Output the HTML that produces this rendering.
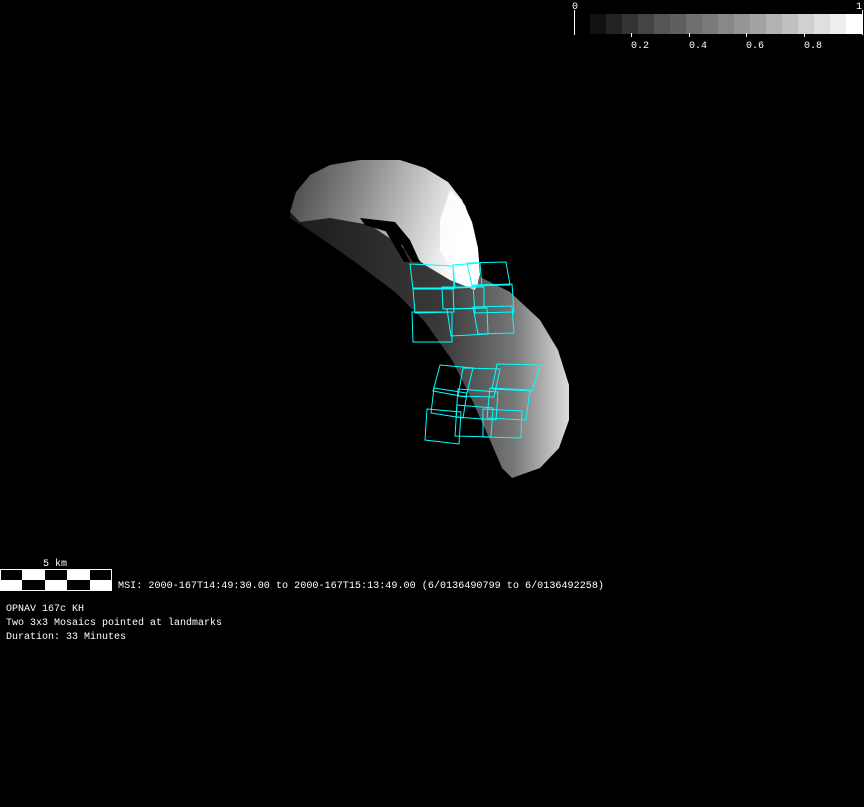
<!DOCTYPE html>
<html><head><style>
html,body{margin:0;padding:0;background:#000;width:864px;height:807px;overflow:hidden}
svg{position:absolute;left:0;top:0}
text{font-family:"Liberation Mono","DejaVu Sans Mono",monospace;fill:#fff;font-size:10px}
</style></head><body>
<svg width="864" height="807" viewBox="0 0 864 807">
<defs>
<linearGradient id="up" x1="0" y1="0" x2="1" y2="0.2">
<stop offset="0" stop-color="#444"/><stop offset="0.4" stop-color="#8a8a8a"/><stop offset="0.75" stop-color="#cfcfcf"/><stop offset="1" stop-color="#fff"/></linearGradient>
<linearGradient id="band" x1="0" y1="0" x2="1" y2="0">
<stop offset="0" stop-color="#1a1a1a"/><stop offset="0.55" stop-color="#3a3a3a"/><stop offset="0.8" stop-color="#777"/><stop offset="1" stop-color="#ddd"/></linearGradient>
</defs>
<!-- colorbar -->
<g>
<rect x="590" y="14" width="16" height="20" fill="#111"/><rect x="606" y="14" width="16" height="20" fill="#222"/><rect x="622" y="14" width="16" height="20" fill="#333"/><rect x="638" y="14" width="16" height="20" fill="#444"/><rect x="654" y="14" width="16" height="20" fill="#555"/><rect x="670" y="14" width="16" height="20" fill="#5f5f5f"/><rect x="686" y="14" width="16" height="20" fill="#6f6f6f"/><rect x="702" y="14" width="16" height="20" fill="#7a7a7a"/><rect x="718" y="14" width="16" height="20" fill="#888"/><rect x="734" y="14" width="16" height="20" fill="#959595"/><rect x="750" y="14" width="16" height="20" fill="#a3a3a3"/><rect x="766" y="14" width="16" height="20" fill="#b2b2b2"/><rect x="782" y="14" width="16" height="20" fill="#c0c0c0"/><rect x="798" y="14" width="16" height="20" fill="#d0d0d0"/><rect x="814" y="14" width="16" height="20" fill="#dfdfdf"/><rect x="830" y="14" width="16" height="20" fill="#eeeeee"/><rect x="846" y="14" width="17" height="20" fill="#fff"/>
<rect x="574" y="10" width="1" height="25" fill="#fff"/>
<rect x="862" y="10" width="1" height="25" fill="#fff"/>
<rect x="631" y="33" width="1" height="4" fill="#fff"/><rect x="689" y="33" width="1" height="4" fill="#fff"/><rect x="746" y="33" width="1" height="4" fill="#fff"/><rect x="804" y="33" width="1" height="4" fill="#fff"/>
<text x="572" y="9">0</text><text x="856" y="9">1</text>
<text x="631" y="48">0.2</text><text x="689" y="48">0.4</text><text x="746" y="48">0.6</text><text x="804" y="48">0.8</text>
</g>
<!-- asteroid -->
<polygon fill="url(#band)" points="292,208 340,212 385,228 425,252 470,272 510,292 540,320 558,350 569,385 569,420 559,448 540,468 512,478 502,468 490,440 472,400 452,360 425,322 395,292 355,262 318,236 290,218"/>
<polygon fill="url(#up)" points="290,212 296,192 310,175 330,165 360,160 400,160 425,168 448,182 462,200 472,222 478,248 480,275 475,290 450,280 425,265 400,245 370,225 330,218 300,222"/>
<polygon fill="#fff" opacity="0.85" points="450,190 465,205 474,230 479,260 478,285 455,275 440,250 440,220"/>
<polygon fill="#000" points="360,218 395,222 410,240 420,262 413,262 402,245 388,232 365,225"/>
<polygon fill="#000" points="385,230 398,238 410,262 404,262 394,245"/>
<!-- cyan boxes -->
<g fill="none" stroke="#00ffff" stroke-width="1">
<polygon points="410,264 453,266 454,289 413,289"/>
<polygon points="453,265 480,263 482,287 455,288"/>
<polygon points="467,263 506,262 510,285 472,286"/>
<polygon points="413,288 453,288 454,312 415,313"/>
<polygon points="442,287 484,287 484,308 443,309"/>
<polygon points="473,285 512,284 514,312 475,313"/>
<polygon points="412,312 452,312 452,342 413,342"/>
<polygon points="447,309 487,308 488,334 451,336"/>
<polygon points="473,307 512,306 514,333 478,334"/>
<polygon points="440,365 473,368 466,397 433,391"/>
<polygon points="463,368 500,369 494,397 458,396"/>
<polygon points="497,364 540,365 532,391 492,389"/>
<polygon points="434,388 467,393 463,418 431,413"/>
<polygon points="458,389 498,392 496,420 456,417"/>
<polygon points="490,388 530,390 526,420 487,418"/>
<polygon points="427,409 461,412 459,444 425,440"/>
<polygon points="457,405 493,408 491,437 455,436"/>
<polygon points="483,409 522,411 521,438 483,437"/>
</g>
<!-- scale bar -->
<rect x="0.5" y="569.5" width="111" height="21" fill="#fff" stroke="#fff"/>
<rect x="1" y="570" width="21" height="10" fill="#000"/><rect x="45" y="570" width="22" height="10" fill="#000"/><rect x="90" y="570" width="21" height="10" fill="#000"/>
<rect x="22" y="580" width="23" height="10" fill="#000"/><rect x="67" y="580" width="23" height="10" fill="#000"/>
<text x="43" y="566">5 km</text>
<text x="118" y="588" textLength="486" lengthAdjust="spacingAndGlyphs">MSI:  2000-167T14:49:30.00 to 2000-167T15:13:49.00 (6/0136490799 to 6/0136492258)</text>
<text x="6" y="611">OPNAV 167c KH</text>
<text x="6" y="625">Two 3x3 Mosaics pointed at landmarks</text>
<text x="6" y="639">Duration: 33 Minutes</text>
</svg>
</body></html>
